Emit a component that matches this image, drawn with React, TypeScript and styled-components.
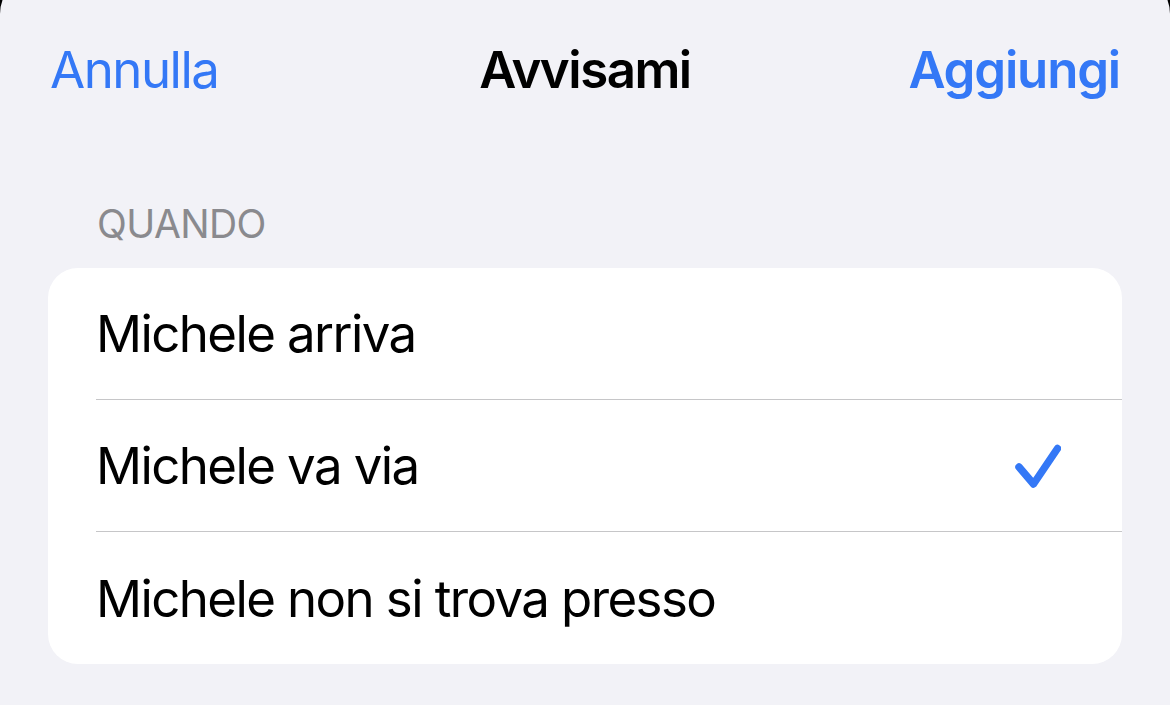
import styled, { createGlobalStyle } from "styled-components";

const GlobalStyle = createGlobalStyle`
  html, body {
    margin: 0;
    padding: 0;
    background: #000;
    overflow: hidden;
  }
  body {
    font-family: Inter, "Noto Sans", "Liberation Sans", sans-serif;
    -webkit-font-smoothing: antialiased;
  }
`;

const Sheet = styled.div`
  margin-top: -26px;
  min-height: 731px;
  background: #f2f2f7;
  border-radius: 40px 40px 0 0;
`;

const NavBar = styled.header`
  display: grid;
  grid-template-columns: 1fr auto 1fr;
  align-items: center;
  padding: 65px 50px 0;
  font-size: 51px;
  line-height: 61px;
`;

const NavButton = styled.span<{ $align: "start" | "end"; $bold?: boolean }>`
  justify-self: ${(p) => p.$align};
  color: #3478f6;
  font-weight: ${(p) => (p.$bold ? 600 : 400)};
  letter-spacing: ${(p) => (p.$bold ? "-1.2px" : "-1.5px")};
`;

const Title = styled.span`
  font-weight: 600;
  color: #000;
  letter-spacing: -1.5px;
`;

const SectionHeader = styled.div`
  margin: 100px 0 0 97px;
  font-size: 39px;
  line-height: 47px;
  color: #8a8a8e;
  letter-spacing: -0.6px;
  text-transform: uppercase;
`;

const Card = styled.div`
  margin: 21px 48px 0;
  background: #fff;
  border-radius: 30px;
  overflow: hidden;
`;

const Row = styled.div`
  padding-left: 48px;
`;

const RowInner = styled.div<{ $last?: boolean }>`
  display: flex;
  align-items: center;
  justify-content: space-between;
  height: ${(p) => (p.$last ? 132 : 131)}px;
  padding-right: 61px;
  border-bottom: ${(p) => (p.$last ? "none" : "1px solid #c6c6c8")};
  font-size: 51px;
  line-height: 61px;
  color: #000;
  letter-spacing: -1.6px;
`;

const Check = () => (
  <svg width="46" height="44" viewBox="0 0 46 44" fill="none">
    <polyline
      points="4,23 18.5,40 42.5,4.5"
      stroke="#3478f6"
      strokeWidth="7.5"
      strokeLinecap="round"
      strokeLinejoin="round"
    />
  </svg>
);

const options = [
  { label: "Michele arriva", selected: false },
  { label: "Michele va via", selected: true },
  { label: "Michele non si trova presso", selected: false },
];

export default function App() {
  return (
    <>
      <GlobalStyle />
      <Sheet>
        <NavBar>
          <NavButton $align="start">Annulla</NavButton>
          <Title>Avvisami</Title>
          <NavButton $align="end" $bold>
            Aggiungi
          </NavButton>
        </NavBar>
        <SectionHeader>Quando</SectionHeader>
        <Card>
          {options.map((o, i) => (
            <Row key={o.label}>
              <RowInner $last={i === options.length - 1}>
                <span>{o.label}</span>
                {o.selected && <Check />}
              </RowInner>
            </Row>
          ))}
        </Card>
      </Sheet>
    </>
  );
}
